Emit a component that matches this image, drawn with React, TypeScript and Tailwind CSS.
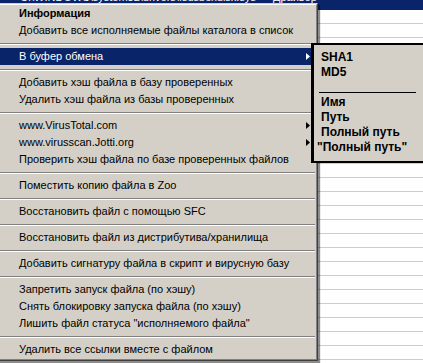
import React from "react";

type Item =
  | { kind: "item"; text: string; bold?: boolean; arrow?: boolean; active?: boolean }
  | { kind: "sep" };

const items: Item[] = [
  { kind: "item", text: "Информация", bold: true },
  { kind: "item", text: "Добавить все исполняемые файлы каталога в список" },
  { kind: "sep" },
  { kind: "item", text: "В буфер обмена", arrow: true, active: true },
  { kind: "sep" },
  { kind: "item", text: "Добавить хэш файла в базу проверенных" },
  { kind: "item", text: "Удалить хэш файла из базы проверенных" },
  { kind: "sep" },
  { kind: "item", text: "www.VirusTotal.com", arrow: true },
  { kind: "item", text: "www.virusscan.Jotti.org", arrow: true },
  { kind: "item", text: "Проверить хэш файла по базе проверенных файлов" },
  { kind: "sep" },
  { kind: "item", text: "Поместить копию файла в Zoo" },
  { kind: "sep" },
  { kind: "item", text: "Восстановить файл с помощью SFC" },
  { kind: "sep" },
  { kind: "item", text: "Восстановить файл из дистрибутива/хранилища" },
  { kind: "sep" },
  { kind: "item", text: "Добавить сигнатуру файла в скрипт и вирусную базу" },
  { kind: "sep" },
  { kind: "item", text: "Запретить запуск файла (по хэшу)" },
  { kind: "item", text: "Снять блокировку запуска файла (по хэшу)" },
  { kind: "item", text: "Лишить файл статуса \"исполняемого файла\"" },
  { kind: "sep" },
  { kind: "item", text: "Удалить все ссылки вместе с файлом" },
];

function Arrow({ white }: { white?: boolean }) {
  return (
    <svg width="4" height="7" viewBox="0 0 4 7" className="absolute right-[5px] top-[5px]">
      <path d="M0 0 L4 3.5 L0 7 Z" fill={white ? "#ffffff" : "#000000"} />
    </svg>
  );
}

export default function App() {
  const rows = Array.from({ length: 25 });
  return (
    <div
      className="relative w-[423px] h-[363px] overflow-hidden bg-white"
      style={{ fontFamily: '"Liberation Sans", Arial, sans-serif' }}
    >
      {/* background list */}
      <div className="flex flex-col">
        <div className="h-[10px] bg-[#0a246a] overflow-hidden">
          <div className="mt-[-9px] pl-[20px] text-[11px] leading-[12px] text-white whitespace-nowrap">
            C:\WINDOWS\system32\drivers\fsusbexdisk.sys — Драйвер
          </div>
        </div>
        {rows.map((_, i) => (
          <div key={i} className="h-[14px] shrink-0 border-b border-[#cccccc]" />
        ))}
      </div>

      {/* main menu */}
      <div className="absolute left-[-3px] top-[3px] w-[321px] border border-t-[#d4d0c8] border-l-[#d4d0c8] border-r-[#404040] border-b-[#404040] shadow-[2px_2px_1px_rgba(0,0,0,0.45)]">
        <div className="border border-t-white border-l-white border-r-[#808080] border-b-[#808080] bg-[#d4d0c8] pl-[1px] pr-[1px] pt-0 pb-[1px]">
          <div className="flex flex-col">
            {items.map((it, i) =>
              it.kind === "sep" ? (
                <div key={i} className="h-[9px] flex flex-col justify-center">
                  <div className="h-px bg-[#808080]" />
                  <div className="h-px bg-white" />
                </div>
              ) : (
                <div
                  key={i}
                  className={
                    "relative h-[17px] pl-[19px] text-[11px] leading-[17px] whitespace-nowrap " +
                    (it.active ? "bg-[#0a246a] text-white" : "text-black") +
                    (it.bold ? " font-bold" : "")
                  }
                >
                  {it.text}
                  {it.arrow && <Arrow white={it.active} />}
                </div>
              )
            )}
          </div>
        </div>
      </div>

      {/* submenu */}
      <div className="absolute left-[311px] top-[43px] w-[120px] h-[120px] bg-[#d4d0c8] border-t-2 border-b-2 border-l-[3px] border-black">
        <div className="flex flex-col pt-[5px] text-[12px] font-bold leading-[15px] text-black">
          <div className="h-[15px] pl-[7px]">SHA1</div>
          <div className="h-[15px] pl-[7px]">MD5</div>
          <div className="h-[15px] flex items-end pb-[2px] pl-[5px] pr-[4px]">
            <div className="h-px w-[97px] bg-black" />
          </div>
          <div className="h-[15px] pl-[7px]">Имя</div>
          <div className="h-[15px] pl-[7px]">Путь</div>
          <div className="h-[15px] pl-[7px]">Полный путь</div>
          <div className="h-[15px] pl-[3px]">"Полный путь"</div>
        </div>
      </div>
    </div>
  );
}
